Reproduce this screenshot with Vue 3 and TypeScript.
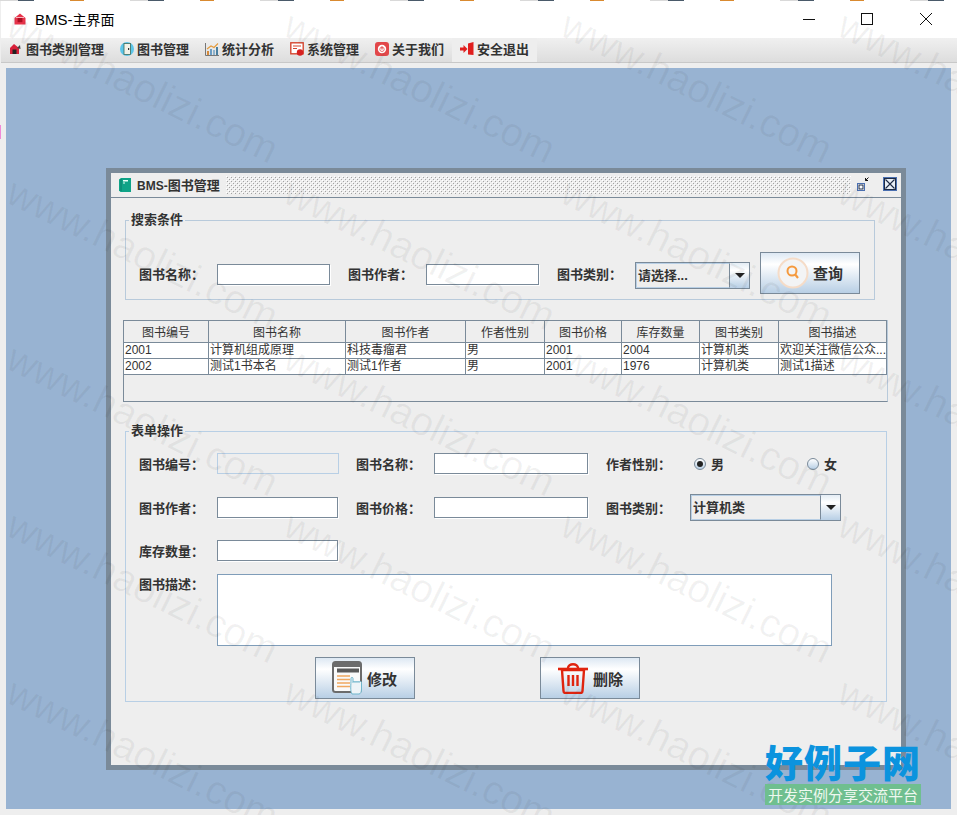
<script setup lang="ts">
const menus = [
  { name: '图书类别管理', icon: 'home', wide: true },
  { name: '图书管理', icon: 'door' },
  { name: '统计分析', icon: 'chart' },
  { name: '系统管理', icon: 'sys' },
  { name: '关于我们', icon: 'about' },
  { name: '安全退出', icon: 'exit', active: true },
]
const headers = ['图书编号', '图书名称', '图书作者', '作者性别', '图书价格', '库存数量', '图书类别', '图书描述']
const rows = [
  ['2001', '计算机组成原理', '科技毒瘤君', '男', '2001', '2004', '计算机类', '欢迎关注微信公众...'],
  ['2002', '测试1书本名', '测试1作者', '男', '2001', '1976', '计算机类', '测试1描述'],
]
const colWidths = [85, 137, 120, 79, 77, 78, 79, 108]
const marks: { left: string; top: string }[] = []
for (let r = 0; r < 5; r++) {
  for (let c = 0; c < 4; c++) {
    marks.push({ left: `${19 + c * 277}px`, top: `${Math.round(4 + r * 166.67)}px` })
  }
}
</script>

<template>
  <div class="page">
    <div class="junk"></div>
    <div class="junk-left"></div>
    <div class="titlebar">
      <svg class="app-icon" viewBox="0 0 12 12" width="12" height="12">
        <path d="M6 0.5 11.5 5V11.5H.5V5Z" fill="#e8334a" />
        <rect x="3.6" y="5" width="4.8" height="4.2" fill="#a80e20" />
        <rect x="2" y="4" width="8" height="1" fill="#f9b3bc" />
      </svg>
      <div class="app-title"><span class="latin">BMS-</span>主界面</div>
      <div class="win-btns">
        <svg viewBox="0 0 14 14" width="14" height="14" class="w-min"><path d="M1 7.5H13" stroke="#111" stroke-width="1" /></svg>
        <svg viewBox="0 0 14 14" width="14" height="14" class="w-max"><rect x="1.5" y="1.5" width="11" height="11" fill="none" stroke="#111" /></svg>
        <svg viewBox="0 0 14 14" width="14" height="14" class="w-close"><path d="M1 1 13 13M13 1 1 13" stroke="#111" stroke-width="1" /></svg>
      </div>
    </div>

    <div class="menubar">
      <div v-for="m in menus" :key="m.name" class="menu-item" :class="{ active: m.active }">
        <svg class="menu-icon" viewBox="0 0 14 14" width="14" height="14">
          <template v-if="m.icon === 'home'">
            <path d="M5 2 10 6V12H1V6Z" fill="#d8203a" />
            <rect x="3.5" y="7.5" width="4" height="4.5" fill="#222" />
            <path d="M8 6 11 3 11.5 7Z" fill="#444" />
          </template>
          <template v-else-if="m.icon === 'door'">
            <circle cx="7" cy="7" r="7" fill="#5cc6ea" />
            <rect x="4" y="1.5" width="6.5" height="11" fill="#f2f2e8" stroke="#3a6a5a" stroke-width=".8" />
            <rect x="8" y="6" width="1.2" height="2" fill="#333" />
          </template>
          <template v-else-if="m.icon === 'chart'">
            <path d="M.5 1V13.5H15" stroke="#777" stroke-width="1" fill="none" />
            <rect x="2" y="9" width="2" height="4" fill="#d58a3b" />
            <rect x="5" y="7" width="2" height="6" fill="#6b9dc4" />
            <rect x="8" y="8" width="2" height="5" fill="#8fb3cc" />
            <rect x="11" y="5" width="2" height="8" fill="#4a7f9f" />
            <path d="M2 7 6 4 9 5.5 13 1.5" stroke="#e59a3a" stroke-width="1.1" fill="none" />
          </template>
          <template v-else-if="m.icon === 'sys'">
            <rect x=".8" y=".8" width="12.4" height="11" fill="#fff" stroke="#d64630" stroke-width="1.4" />
            <path d="M3 4H11M3 6.5H7" stroke="#d64630" stroke-width="1.2" />
            <circle cx="10" cy="10.500" r="3.200" fill="#d62020" />
          </template>
          <template v-else-if="m.icon === 'about'">
            <rect width="14" height="14" rx="3" fill="#e2474a" />
            <circle cx="7" cy="7" r="4.200" fill="#fff" />
            <path d="M7 4.500V7.500" stroke="#e2474a" stroke-width="1.200" />
            <circle cx="7" cy="7.300" r="2.200" fill="none" stroke="#e2474a" stroke-width=".8" />
          </template>
          <template v-else>
            <path d="M8 1.500 13.500 0V13L8 12.500Z" fill="#e01e1e" />
            <path d="M0 5.500H3.500V3L7.500 7 3.500 11V8.500H0Z" fill="#e01e1e" />
          </template>
        </svg>
        <span>{{ m.name }}</span>
      </div>
    </div>

    <div class="desktop">
      <div class="frame">
        <div class="frame-title">
          <svg viewBox="0 0 12 14" width="12" height="14" class="book">
            <path d="M0 1.500 2 0H12V14H1.500L0 12.500Z" fill="#0fa387" />
            <path d="M2 1V13" stroke="#0b7f6a" stroke-width="1" />
            <rect x="4" y="2" width="5" height="1.500" fill="#e8fff8" />
            <rect x="4" y="4.500" width="2" height="1" fill="#e8fff8" />
          </svg>
          <span class="frame-text"><span class="latin small">BMS-</span>图书管理</span>
          <svg class="bumps" width="625" height="18">
            <defs>
              <pattern id="metal-bumps" width="4" height="4" patternUnits="userSpaceOnUse">
                <rect x="0" y="0" width="1" height="1" fill="#ffffff" />
                <rect x="1" y="1" width="1" height="1" fill="#a3a3a3" />
                <rect x="2" y="2" width="1" height="1" fill="#ffffff" />
                <rect x="3" y="3" width="1" height="1" fill="#a3a3a3" />
              </pattern>
            </defs>
            <rect width="625" height="18" fill="url(#metal-bumps)" />
          </svg>
          <svg viewBox="0 0 14 15" width="14" height="15" class="iconify">
            <rect x=".5" y="6.500" width="7" height="7" fill="#fff" stroke="#4a6fb0" />
            <rect x="2" y="8" width="4" height="4" fill="#fff" stroke="#1c2a44" />
            <path d="M11.500 0.500 8.500 3.500M8.500 1V3.500H11" stroke="#111" stroke-width="1" fill="none" />
          </svg>
          <svg viewBox="0 0 14 14" width="14" height="14" class="close-x">
            <rect x=".5" y=".5" width="13" height="13" fill="#e8eef5" stroke="#4a6fb0" />
            <rect x="1.500" y="1.500" width="11" height="11" fill="none" stroke="#1c2a44" />
            <path d="M2.500 2.500 11.500 11.500M11.500 2.500 2.500 11.500" stroke="#1c2a44" stroke-width="1.100" />
          </svg>
        </div>

        <div class="frame-body">
          <div class="group search-group">
            <div class="group-title">搜索条件</div>
            <div class="search-row">
              <label class="lbl tall">图书名称：</label>
              <input class="txt s-input" />
              <label class="lbl tall gap-l">图书作者：</label>
              <input class="txt s-input" />
              <label class="lbl tall gap-l">图书类别：</label>
              <div class="combo s-combo">
                <div class="combo-val">请选择...</div>
                <div class="combo-arrow"><i></i></div>
              </div>
              <button class="btn q-btn">
                <svg viewBox="0 0 32 32" width="32" height="32">
                  <circle cx="16" cy="16" r="14.500" fill="#f3f4f5" stroke="#f5dcc8" stroke-width="2" />
                  <circle cx="15" cy="14" r="4.500" fill="none" stroke="#f59a3e" stroke-width="2" />
                  <path d="M18.200 17.500 21 21" stroke="#f59a3e" stroke-width="2.200" />
                </svg>
                <span class="up">查询</span>
              </button>
            </div>
          </div>

          <div class="table-wrap">
            <table class="tbl">
              <colgroup>
                <col v-for="(w, i) in colWidths" :key="i" :style="{ width: w + 'px' }" />
              </colgroup>
              <thead>
                <tr><th v-for="h in headers" :key="h">{{ h }}</th></tr>
              </thead>
              <tbody>
                <tr v-for="r in rows" :key="r[0]">
                  <td v-for="(c, i) in r" :key="i">{{ c }}</td>
                </tr>
              </tbody>
            </table>
          </div>

          <div class="group form-group">
            <div class="group-title">表单操作</div>
            <div class="row r1">
              <label class="lbl">图书编号：</label>
              <input class="txt w122 disabled" disabled />
              <label class="lbl gap-m">图书名称：</label>
              <input class="txt w154" />
              <label class="lbl gap-l wide">作者性别：</label>
              <div class="radio-wrap">
                <span class="radio on"></span><span class="radio-text">男</span>
              </div>
              <div class="radio-wrap">
                <span class="radio"></span><span class="radio-text">女</span>
              </div>
            </div>
            <div class="row r2">
              <label class="lbl">图书作者：</label>
              <input class="txt w121" />
              <label class="lbl gap-m2">图书价格：</label>
              <input class="txt w154" />
              <label class="lbl gap-l wide">图书类别：</label>
              <div class="combo f-combo">
                <div class="combo-val">计算机类</div>
                <div class="combo-arrow"><i></i></div>
              </div>
            </div>
            <div class="row r3">
              <label class="lbl">库存数量：</label>
              <input class="txt w121" />
            </div>
            <div class="row r4">
              <label class="lbl">图书描述：</label>
              <textarea class="area"></textarea>
            </div>
            <div class="btn-row">
              <button class="btn e-btn">
                <svg viewBox="0 0 32 34" width="32" height="34">
                  <rect x="1" y="1" width="28" height="30" rx="2.500" fill="#fafafa" stroke="#6c6c6c" stroke-width="2" />
                  <rect x="1" y="1" width="28" height="5" fill="#6c6c6c" />
                  <rect x="5" y="7.500" width="22" height="4" fill="#5a5a5a" />
                  <path d="M5 15H18M5 18.500H18M5 22H18M5 25.500H18" stroke="#f0a860" stroke-width="1.600" />
                  <path d="M20 33C18 30 19 25 19 17.500C19 16 21 16 21 17.500V21.500C21 20 23 20 23 21.500C23 20 25 20 25 21.500C25 20 27 20 27 21.500C27 20 29.500 20 29.500 21.500V28C29.500 31 28.500 33 27 33Z" fill="#eef4f7" stroke="#6fb6cc" stroke-width="1" />
                </svg>
                <span>修改</span>
              </button>
              <button class="btn d-btn">
                <svg viewBox="0 0 30 32" width="30" height="32">
                  <path d="M4 8H26L24.500 29C24.400 30.500 23.500 31 22.500 31H7.500C6.500 31 5.600 30.500 5.500 29Z" fill="none" stroke="#e0240f" stroke-width="2.400" />
                  <path d="M0 7H30" stroke="#e0240f" stroke-width="2.600" />
                  <path d="M10 6C10 1 20 1 20 6" fill="none" stroke="#e0240f" stroke-width="2.400" />
                  <path d="M10.500 13V24M15 13V24M19.500 13V24" stroke="#e0240f" stroke-width="2.400" />
                </svg>
                <span>删除</span>
              </button>
            </div>
          </div>
        </div>
      </div>
    </div>

    <div class="watermarks">
      <span v-for="(m, i) in marks" :key="i" class="mark" :style="m">www.haolizi.com</span>
    </div>

    <div class="logo">
      <div class="logo-main">好例子网</div>
      <div class="logo-sub">开发实例分享交流平台</div>
    </div>
  </div>
</template>

<style>
html, body { margin: 0; background: #eeeeee; }
</style>

<style scoped>
.page {
  position: relative;
  width: 957px;
  height: 815px;
  overflow: hidden;
  background: #eeeeee;
  color: #333333;
  font-family: "Liberation Sans", "Noto Sans CJK SC", sans-serif;
  font-size: 13px;
}
.junk {
  height: 1px;
  background: repeating-linear-gradient(90deg, #d9d9d9 0 18px, #4a5a6a 18px 34px, #fff 34px 70px, #d98a30 70px 84px, #fff 84px 130px);
}
.junk-left {
  position: absolute;
  left: 0;
  top: 125px;
  width: 1px;
  height: 14px;
  background: #f08ad8;
}
.titlebar {
  display: flex;
  align-items: center;
  box-sizing: border-box;
  height: 37px;
  padding-bottom: 2px;
  background: #ffffff;
  margin-left: 1px;
  color: #000;
}
.app-icon { margin-left: 13px; }
.app-title { margin-left: 9px; font-size: 14px; }
.latin { font-size: 15px; }
.win-btns { margin-left: auto; display: flex; align-items: center; }
.w-min { margin-right: 44px; }
.w-max { margin-right: 45px; }
.w-close { margin-right: 24px; }
.menubar {
  display: flex;
  height: 24px;
  margin-left: 1px;
  background: linear-gradient(#f0f0f0, #dddddd);
  border-bottom: 1px solid #c8c8c8;
}
.menu-item {
  display: flex;
  align-items: center;
  gap: 3px;
  padding: 0 8px 3px;
  font-weight: 700;
  font-size: 13px;
}
.menu-item.active { background: #eeeeee; }
.menu-icon { flex: none; }
.desktop {
  position: relative;
  margin: 5px 6px 0;
  height: 741px;
  background: #98b3d2;
}
.frame {
  position: absolute;
  left: 100px;
  top: 100px;
  width: 800px;
  height: 602px;
  box-sizing: border-box;
  border: 5px solid #7a8a99;
  background: #eeeeee;
}
.frame-title {
  display: flex;
  align-items: center;
  height: 24px;
  box-sizing: content-box;
  border-bottom: 1px solid #7a8a99;
  padding: 0 0 0 8px;
}
.book { flex: none; }
.frame-text {
  margin-left: 6px;
  padding-bottom: 2px;
  font-weight: 700;
  font-size: 13px;
  white-space: nowrap;
}
.latin.small { font-size: 12px; }
.bumps { flex: none; margin-left: 6px; }
.iconify { margin-left: 6px; flex: none; margin-top: -1px; }
.close-x { margin-left: 12px; flex: none; margin-top: -3px; }
.frame-body { padding-left: 14px; }
.group {
  position: relative;
  box-sizing: border-box;
  border: 1px solid #b8cadb;
}
.group-title {
  position: absolute;
  left: 3px;
  top: -9px;
  padding: 0 2px 0 2px;
  background: #eeeeee;
  font-weight: 700;
  font-size: 13px;
  line-height: 16px;
}
.search-group {
  width: 750px;
  height: 80px;
  margin-top: 22px;
  padding: 31px 0 0 13px;
}
.search-row { display: flex; align-items: flex-start; }
.lbl {
  flex: none;
  width: 78px;
  font-weight: 700;
  font-size: 13px;
  line-height: 21px;
  white-space: nowrap;
}
.lbl.tall { line-height: 45px; }
.gap-l { margin-left: 18px; }
.gap-m { margin-left: 17px; }
.gap-m2 { margin-left: 18px; }
.lbl.wide { width: 84px; }
.row > .lbl { margin-top: 2px; }
.txt {
  flex: none;
  box-sizing: border-box;
  height: 21px;
  padding: 0 2px;
  border: 1px solid #7a8a99;
  background: #ffffff;
  box-shadow: 1px 1px 0 #ffffff;
  outline: none;
}
.s-input { width: 113px; margin-top: 12px; }
.w122 { width: 122px; }
.w121 { width: 121px; }
.w154 { width: 154px; }
.txt.disabled { background: #eeeeee; border-color: #b8cfe5; box-shadow: none; }
.combo {
  flex: none;
  display: flex;
  box-sizing: border-box;
  border: 1px solid #7a8a99;
  background: #eeeeee;
  font-weight: 700;
  font-size: 13px;
}
.s-combo { width: 115px; height: 27px; margin-top: 10px; }
.f-combo { width: 151px; height: 27px; }
.combo-val {
  flex: 1;
  box-sizing: border-box;
  border: 1px solid #b8cfe5;
  border-right: 1px solid #7a8a99;
  padding-left: 1px;
  line-height: 23px;
  white-space: nowrap;
}
.combo-arrow {
  flex: none;
  width: 19px;
  display: flex;
  align-items: center;
  justify-content: center;
  background: linear-gradient(#e4edf5, #ffffff 30%, #b8cfe5);
}
.combo-arrow i {
  width: 0;
  height: 0;
  border-left: 5px solid transparent;
  border-right: 5px solid transparent;
  border-top: 5px solid #222;
}
.btn {
  flex: none;
  display: flex;
  align-items: center;
  box-sizing: border-box;
  width: 100px;
  height: 42px;
  padding: 0;
  border: 1px solid #7a8a99;
  background: linear-gradient(#dde8f3, #ffffff 28%, #b8cfe5);
  color: #333333;
  font-family: inherit;
  font-weight: 700;
  font-size: 15px;
}
.q-btn { margin-left: 10px; padding-left: 16px; gap: 4px; }
.up { margin-top: -2px; }
.table-wrap {
  box-sizing: border-box;
  width: 765px;
  height: 82px;
  margin: 20px 0 0 -2px;
  border-left: 1px solid #7a8a99;
  border-bottom: 1px solid #7a8a99;
  border-right: 1px solid #b8cadb;
}
.tbl {
  width: 763px;
  margin-left: -1px;
  table-layout: fixed;
  border-collapse: collapse;
  font-size: 12px;
}
.tbl th, .tbl td {
  border: 1px solid #7a8a99;
  overflow: hidden;
  white-space: nowrap;
  font-weight: 400;
}
.tbl th { height: 21px; padding: 0; background: #eeeeee; text-align: center; }
.tbl td { height: 15px; padding: 0 0 0 1px; line-height: 15px; background: #ffffff; color: #333; }
.form-group {
  width: 762px;
  height: 271px;
  margin-top: 29px;
  padding: 21px 0 0 13px;
  border-color: #b8cfe5;
}
.row { display: flex; align-items: center; height: 21px; }
.r1 { margin-bottom: 23px; }
.r2 { margin-bottom: 22px; }
.r3 { margin-bottom: 13px; }
.r4 { align-items: flex-start; height: 72px; margin-bottom: 11px; }
.r4 .lbl { line-height: 18px; }
.area {
  box-sizing: border-box;
  width: 615px;
  height: 72px;
  border: 1px solid #7f9db9;
  background: #ffffff;
  outline: none;
  resize: none;
}
.radio-wrap {
  flex: none;
  display: flex;
  align-items: center;
  gap: 5px;
  width: 113px;
  margin-left: 4px;
  margin-right: -4px;
  font-weight: 700;
}
.radio {
  box-sizing: border-box;
  width: 12px;
  height: 12px;
  border-radius: 50%;
  border: 1px solid #7a8a99;
  background: linear-gradient(#ffffff, #b8cfe5);
  display: flex;
  align-items: center;
  justify-content: center;
}
.radio.on::after {
  content: "";
  width: 6px;
  height: 6px;
  border-radius: 50%;
  background: #222;
}
.btn-row { display: flex; padding-left: 176px; gap: 125px; }
.e-btn { padding-left: 16px; gap: 3px; }
.d-btn { padding-left: 17px; gap: 5px; }
.watermarks {
  position: absolute;
  inset: 0;
  pointer-events: none;
}
.mark {
  position: absolute;
  transform-origin: 0 0;
  transform: rotate(26deg);
  font-size: 40px;
  line-height: 1;
  white-space: nowrap;
  color: rgba(40, 40, 40, 0.06);
}
.logo {
  position: absolute;
  left: 765px;
  top: 744px;
  width: 156px;
}
.logo-main {
  height: 40px;
  font-size: 38px;
  line-height: 40px;
  font-weight: 900;
  color: #0b93de;
  white-space: nowrap;
  letter-spacing: 1px;
}
.logo-sub {
  height: 21px;
  background: #6fbf8f;
  color: #eef8f0;
  font-size: 15px;
  line-height: 21px;
  text-align: center;
  white-space: nowrap;
  font-family: "Noto Sans CJK SC", sans-serif;
}
</style>
